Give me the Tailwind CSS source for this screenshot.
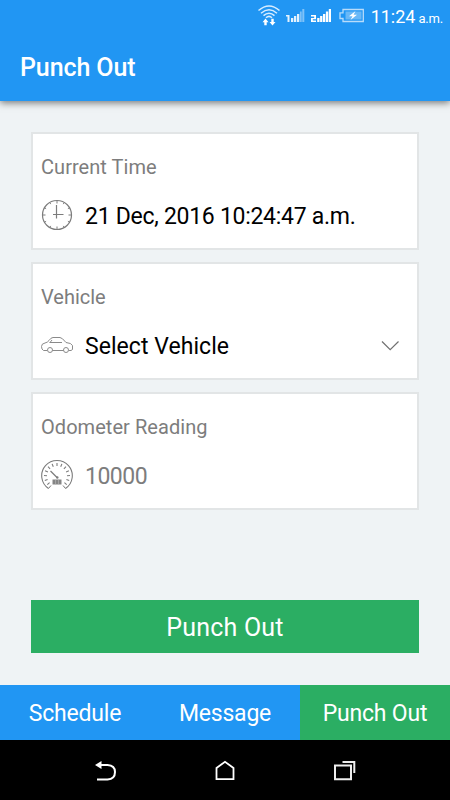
<!DOCTYPE html>
<html lang="en">
<head>
  <meta charset="UTF-8" />
  <meta name="viewport" content="width=device-width,initial-scale=1" />
  <title>Punch Out</title>
  <script src="https://cdn.jsdelivr.net/npm/@tailwindcss/browser@4"></script>
</head>
<body class="w-[450px] h-[800px] overflow-hidden flex flex-col bg-[#eff3f5] font-[Roboto,sans-serif]">
  <!-- Status bar + title -->
  <header class="relative h-[101px] shrink-0 bg-[#2196f3] text-white shadow-[0_2px_7px_rgba(0,0,0,0.5)]">
    <div class="h-8 flex justify-end pr-[7px]">
      <svg class="w-[116px] h-8 shrink-0" viewBox="252 0 116 32" fill="none" stroke="#fff">
        <!-- wifi -->
        <g stroke-width="1.5" stroke="#d8edff">
          <path d="M258.5 10.5Q269 1.500 279.500 10.500" />
          <path d="M261 13.200Q269 6.200 277 13.200" />
          <path d="M263.500 15.600Q269 10.800 274.500 15.600" />
          <path d="M266 17.800Q269 15 272 17.800" />
        </g>
        <path d="M265.500 18.500L268.500 22.200H266.700V25.300H264.300V22.200H262.500ZM272.500 25.500L275.500 21.900H273.700V18.800H271.300V21.900H269.500Z" fill="#fff" stroke="none" />
        <!-- signal of both sim cards -->
        <g stroke="none" fill="#fff">
          <path d="M286 15H289.500V22H287.500V16.500H286ZM291 18H293.300V22H291ZM294 16H296.300V22H294ZM297 14H299.300V22H297Z" fill="#e3f2fe" />
          <path d="M299.900 11.500H301.700V22H299.900ZM302.300 9H304.300V22H302.300Z" fill="#7fc2f8" />
          <path d="M311 15H316V19.300H312.800V20.500H316V22H311V18H314.200V16.500H311ZM317.200 18H319.500V22H317.200ZM320.100 16H322.400V22H320.100ZM323 14H325.300V22H323ZM325.900 11.500H328.200V22H325.900ZM328.800 9H331V22H328.800Z" />
        </g>
        <!-- battery -->
        <path d="M343 9.500H363.300V21.500H343V18.500H340V12.800H343Z" stroke="#b8dcfa" stroke-width="1.300" />
        <path d="M345.500 11.500H361.500V19.500H345.500Z" fill="#69b8f7" stroke="none" />
        <path d="M355.500 11L349 16.300H352.500L350.500 20L357 14.700H353.600Z" fill="#fff" stroke="none" />
      </svg>
      <div class="w-[75px] shrink-0 flex items-baseline justify-end pt-[5px] text-[18px] leading-[23px]">11:24<span class="ml-[3px] text-[13px] tracking-[-0.2px]">a.m.</span></div>
    </div>
    <h1 class="pl-5 pt-[21px] text-[25px] leading-[30px] font-medium tracking-[-0.1px]">Punch Out</h1>
  </header>

  <main class="grow flex flex-col px-[31px] pt-[31px]">
    <div class="flex flex-col gap-3">
      <section class="h-[118px] bg-white border-2 border-[#e2e5e6] pl-[8px] pt-[21px]">
        <h2 class="text-[20px] leading-[24px] tracking-[0.05px] text-[#7d7d7d]">Current Time</h2>
        <div class="mt-[20px] h-[34px] flex items-center">
          <svg class="w-[34px] h-[34px]" viewBox="0 0 34 34" fill="none" stroke="#7c7c7c">
            <circle cx="16" cy="16" r="14.500" stroke-width="1.200" />
            <path d="M15.500 6V19.500M12 15.500H22.500" stroke-width="1.200" />
            <path d="M16 1.500V4.500M16 27.500V30.500M1.500 16H4.500M27.500 16H30.500M23.300 3.400L22.300 5.100M28.600 8.700L26.900 9.700M28.600 23.300L26.900 22.300M23.300 28.600L22.300 26.900M8.700 28.600L9.700 26.900M3.400 23.300L5.100 22.300M3.400 8.700L5.100 9.700M8.700 3.400L9.700 5.100" />
          </svg>
          <span class="ml-[10px] pt-[2px] text-[23px] tracking-[-0.28px] text-black">21 Dec, 2016 10:24:47 a.m.</span>
        </div>
      </section>

      <section class="h-[118px] bg-white border-2 border-[#e2e5e6] pl-[8px] pt-[21px]">
        <h2 class="text-[20px] leading-[24px] text-[#7d7d7d]">Vehicle</h2>
        <div class="mt-[20px] h-[34px] flex items-center">
          <svg class="w-[34px] h-[34px]" viewBox="0 0 34 34" fill="none" stroke="#8a8a8a" stroke-width="1">
            <path d="M6 21.500H2.500Q0.500 20.500 0.500 17.500Q0.500 14.500 4 14Q6.500 13.500 8 11.500Q10 8.500 12 8.500H19Q21 8.500 25 13.500Q30.500 14 31.500 16.500V20.500L30 21.500H28M11.500 21.500H22.500" />
            <path d="M8.500 13.500H21M11 11L9 13.500" />
            <circle cx="9" cy="21" r="2.500" />
            <circle cx="25" cy="21" r="2.500" />
          </svg>
          <span class="ml-[10px] pt-[2px] text-[23px] tracking-[0.05px] text-black">Select Vehicle</span>
          <svg class="w-5 h-5 ml-auto mr-[17px]" viewBox="0 0 20 20" fill="none" stroke="#707070" stroke-width="1.200">
            <path d="M2 5.500L10.200 13.700L18.500 5.500" />
          </svg>
        </div>
      </section>

      <section class="h-[118px] bg-white border-2 border-[#e2e5e6] pl-[8px] pt-[21px]">
        <h2 class="text-[20px] leading-[24px] tracking-[0.05px] text-[#7d7d7d]">Odometer Reading</h2>
        <div class="mt-[20px] h-[34px] flex items-center">
          <svg class="w-[34px] h-[34px]" viewBox="0 0 34 34" fill="none" stroke="#7c7c7c">
            <path d="M7.500 29.500A15.300 15.300 0 1 1 24.500 29.500" stroke-width="1.100" />
            <!-- dial ticks -->
            <path d="M16 4V7M20.900 4.900L19.700 7.700M25 7.700L22.900 9.800M27.900 11.700L25.100 12.900M29 16.500L26 16.700M28.200 21.400L25.400 20.400M25.700 25.700L23.400 23.700M11.100 4.900L12.300 7.700M7 7.700L9.100 9.800M4.100 11.700L6.900 12.900M3 16.500L6 16.700M3.800 21.400L6.600 20.400M6.300 25.700L8.600 23.700" stroke-width="1.100" />
            <path d="M7.500 29.500L10 26.500M24.500 29.500L22 26.500" />
            <path d="M9.500 12L16 18.500" stroke-width="1.300" />
            <circle cx="16.300" cy="18.500" r="1.200" fill="#7c7c7c" stroke="none" />
            <path d="M11.500 20.500H20.500V25.500H11.500Z" fill="#858585" stroke="none" />
            <path d="M14.500 20.500V25.500M17.500 20.500V25.500" stroke="#bbb" stroke-width=".6" />
          </svg>
          <span class="ml-[10px] pt-[2px] text-[23px] tracking-[-0.5px] text-[#7d7d7d]">10000</span>
        </div>
      </section>
    </div>

    <button class="mt-[90px] h-[53px] shrink-0 bg-[#2bae63] pt-[2px] text-white text-[25px] leading-[30px] tracking-[0.2px]">Punch Out</button>
  </main>

  <nav class="h-[55px] shrink-0 grid grid-cols-3 bg-[#2196f3] text-white text-[23px] tracking-[-0.2px] text-center leading-[58px]">
    <a>Schedule</a>
    <a>Message</a>
    <a class="bg-[#2bae63]">Punch Out</a>
  </nav>

  <!-- Android navigation keys -->
  <div class="h-[60px] shrink-0 bg-black flex items-center justify-center gap-24">
    <svg class="w-6 h-6" viewBox="0 0 24 24" fill="none" stroke="#fff" stroke-width="2">
      <path d="M5 7H14.500Q22 7.500 22 14Q22 21 14.500 21.500H4" />
      <path d="M2 7L8.500 3V11Z" fill="#fff" stroke="none" />
    </svg>
    <svg class="w-6 h-6" viewBox="0 0 24 24" fill="none" stroke="#fff" stroke-width="1.800">
      <path d="M3.500 21.200V10L12 3.800L20.500 10V21.200Z" />
    </svg>
    <svg class="w-6 h-6" viewBox="0 0 24 24" fill="none" stroke="#eee" stroke-width="2">
      <path d="M2 7.500H18V21.200H2Z" />
      <path d="M9.500 4H21.300V15" />
    </svg>
  </div>
</body>
</html>
